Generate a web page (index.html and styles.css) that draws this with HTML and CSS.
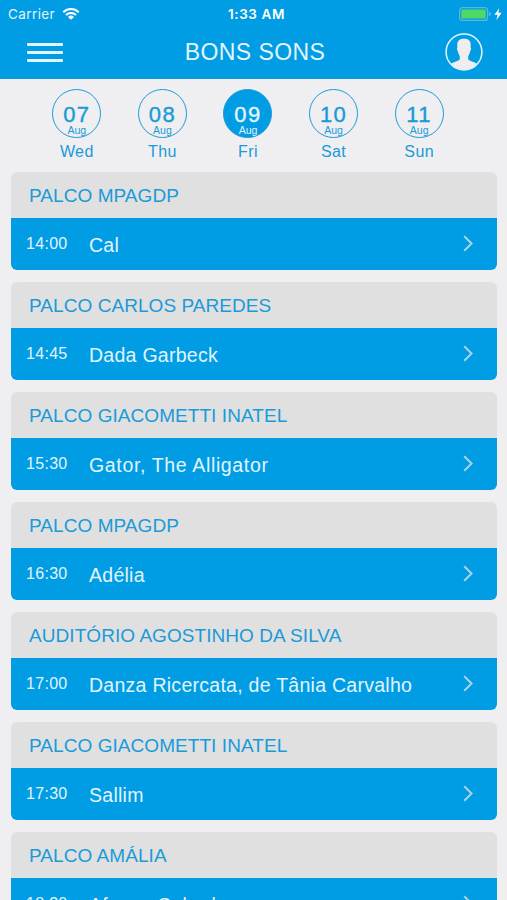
FILE: index.html
```html
<!DOCTYPE html>
<html lang="en">
<head>
  <meta charset="UTF-8" />
  <meta name="viewport" content="width=device-width, initial-scale=1.0"/>
  <title>Bons Sons</title>
  <link rel="stylesheet" href="styles.css">
</head>
<body>
  <svg class="sprite" width="0" height="0">
    <symbol id="chevron" viewBox="0 0 10 17">
      <path d="M1.2 1.2 8.6 8.5 1.2 15.8" fill="none" stroke="currentColor" stroke-width="2"/>
    </symbol>
  </svg>

  <header class="header">
    <div class="status">
      <div class="carrier">
        <span>Carrier</span>
        <svg class="wifi" width="18" height="13" viewBox="0 0 18 13">
          <path d="M1.3 5.2a11 11 0 0 1 15.4 0M4 8a7.2 7.2 0 0 1 10 0" fill="none" stroke="#fff" stroke-width="2.1"/>
          <path d="M6 9.9a4.4 4.4 0 0 1 6 0L9 12.8z" fill="#fff"/>
        </svg>
      </div>
      <div class="clock">1:33 AM</div>
      <svg class="battery" width="43" height="14" viewBox="0 0 43 14">
        <rect x=".6" y=".6" width="28" height="12.8" rx="3" fill="none" stroke="#5fb7d8" stroke-width="1.2"/>
        <rect x="2.3" y="2.4" width="24.4" height="9.2" rx="1.2" fill="#4cd964"/>
        <path d="M30 4.8q2 .6 2 2.2t-2 2.2z" fill="#5fb7d8"/>
        <path d="M40.2 1.2 35.4 7.8h3.2L37.4 13.2l5.2-7.4h-3.2z" fill="#fff"/>
      </svg>
    </div>
    <div class="navbar">
      <div class="menu"><i></i><i></i><i></i></div>
      <h1 class="title">BONS SONS</h1>
      <svg class="avatar" width="38" height="38" viewBox="0 0 38 38">
        <circle cx="19" cy="19" r="17.9" fill="none" stroke="#e2f4fd" stroke-width="1.5"/>
        <path d="M19 5.8C23.5 5.8 26 8 25.7 12.5L25.5 14.5C26.5 14.6 26.2 17.2 25 18.5C24.6 20.8 23.9 22 23.2 22.9V26.3C24.5 28.3 29 28.7 32.3 31A17.9 17.9 0 0 1 5.7 31C9 28.7 13.5 28.3 14.8 26.3V22.9C14.1 22 13.4 20.8 13 18.5C11.8 17.2 11.5 14.6 12.5 14.5L12.3 12.5C12 8 14.5 5.8 19 5.8Z" fill="#eeeef0"/>
      </svg>
    </div>
  </header>

  <nav class="days">
    <div class="day"><div class="circle"><b>07</b><small>Aug</small></div><span>Wed</span></div>
    <div class="day"><div class="circle"><b>08</b><small>Aug</small></div><span>Thu</span></div>
    <div class="day active"><div class="circle"><b>09</b><small>Aug</small></div><span>Fri</span></div>
    <div class="day"><div class="circle"><b>10</b><small>Aug</small></div><span>Sat</span></div>
    <div class="day"><div class="circle"><b>11</b><small>Aug</small></div><span>Sun</span></div>
  </nav>

  <main class="list">
    <section class="card">
      <h2 class="stage">PALCO MPAGDP</h2>
      <div class="show"><span class="time">14:00</span><span class="artist">Cal</span><svg class="chevron"><use href="#chevron"/></svg></div>
    </section>
    <section class="card">
      <h2 class="stage">PALCO CARLOS PAREDES</h2>
      <div class="show"><span class="time">14:45</span><span class="artist">Dada Garbeck</span><svg class="chevron"><use href="#chevron"/></svg></div>
    </section>
    <section class="card">
      <h2 class="stage">PALCO GIACOMETTI INATEL</h2>
      <div class="show"><span class="time">15:30</span><span class="artist loose">Gator, The Alligator</span><svg class="chevron"><use href="#chevron"/></svg></div>
    </section>
    <section class="card">
      <h2 class="stage">PALCO MPAGDP</h2>
      <div class="show"><span class="time">16:30</span><span class="artist">Adélia</span><svg class="chevron"><use href="#chevron"/></svg></div>
    </section>
    <section class="card">
      <h2 class="stage">AUDITÓRIO AGOSTINHO DA SILVA</h2>
      <div class="show"><span class="time">17:00</span><span class="artist">Danza Ricercata, de Tânia Carvalho</span><svg class="chevron"><use href="#chevron"/></svg></div>
    </section>
    <section class="card">
      <h2 class="stage">PALCO GIACOMETTI INATEL</h2>
      <div class="show"><span class="time">17:30</span><span class="artist">Sallim</span><svg class="chevron"><use href="#chevron"/></svg></div>
    </section>
    <section class="card">
      <h2 class="stage">PALCO AMÁLIA</h2>
      <div class="show"><span class="time">18:30</span><span class="artist">Afonso Cabral</span><svg class="chevron"><use href="#chevron"/></svg></div>
    </section>
  </main>
</body>
</html>
```
FILE: styles.css
```css
* {
  box-sizing: border-box;
}

body {
  margin: 0;
  height: 900px;
  overflow: hidden;
  background: #efeff1;
  font-family: "Liberation Sans", Arial, sans-serif;
  color: #1a9ad9;
}

.sprite {
  display: block;
}

.header {
  height: 79px;
  background: #009de4;
  color: #fff;
}

.status {
  display: grid;
  grid-template-columns: 1fr auto 1fr;
  align-items: center;
  height: 27px;
  padding: 0 5px 0 8px;
  font-family: Inter, sans-serif;
  font-size: 13.5px;
}

.carrier {
  display: flex;
  align-items: center;
  gap: 7px;
  letter-spacing: 0.4px;
  color: #e2f4fd;
}

.clock {
  padding-left: 3px;
  font-weight: 600;
  font-size: 13.5px;
  letter-spacing: 0.6px;
}

.battery {
  justify-self: end;
}

.navbar {
  display: grid;
  grid-template-columns: 1fr auto 1fr;
  align-items: center;
  height: 50px;
  padding: 0 24px 0 27px;
}

.menu {
  display: flex;
  flex-direction: column;
  gap: 5px;
  width: 36px;
}

.menu i {
  height: 3px;
  border-radius: 1px;
  background: #e2f4fd;
}

.title {
  margin: 0;
  font-size: 23px;
  font-weight: normal;
  letter-spacing: 0.4px;
  color: #e2f4fd;
}

.avatar {
  justify-self: end;
}

.days {
  display: flex;
  gap: 36px;
  height: 93px;
  padding: 10px 0 0 52px;
}

.day {
  display: flex;
  flex-direction: column;
  align-items: center;
  width: 49.6px;
  font-size: 16px;
}

.day span {
  margin-top: 3px;
  line-height: 21px;
  letter-spacing: 0.4px;
}

.circle {
  display: flex;
  flex-direction: column;
  align-items: center;
  width: 49px;
  height: 49px;
  padding-top: 15px;
  border: 1px solid #1a9ad9;
  border-radius: 50%;
}

.circle b {
  font-size: 22px;
  font-weight: normal;
  line-height: 20px;
  letter-spacing: 1.4px;
  -webkit-text-stroke: 0.4px;
}

.circle small {
  font-size: 10.5px;
  line-height: 11px;
}

.active .circle {
  background: #009de4;
  color: #e2f4fd;
}

.list {
  display: flex;
  flex-direction: column;
  gap: 12px;
  padding: 0 10px 0 11px;
}

.card {
  flex: none;
  height: 98px;
  border-radius: 6px;
  overflow: hidden;
}

.stage {
  margin: 0;
  height: 46px;
  padding-left: 18px;
  background: #e0e0e0;
  font-size: 19px;
  font-weight: normal;
  line-height: 48px;
  letter-spacing: 0.06px;
}

.show {
  display: flex;
  align-items: center;
  height: 52px;
  padding: 2px 24px 0 15px;
  background: #009de4;
  color: #e2f4fd;
}

.time {
  width: 63px;
  margin-bottom: 2px;
  font-size: 16px;
  letter-spacing: 0.3px;
}

.artist {
  flex: 1;
  font-size: 19.5px;
  letter-spacing: 0.27px;
}

.loose {
  letter-spacing: 0.65px;
}

.chevron {
  width: 10px;
  height: 17px;
  margin-bottom: 3px;
  color: #a9d3e8;
}
```
